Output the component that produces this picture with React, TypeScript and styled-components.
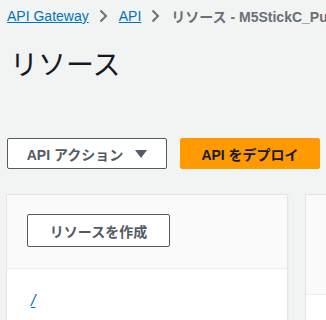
import React from "react";
import styled, { createGlobalStyle } from "styled-components";

const Global = createGlobalStyle`
  html, body {
    margin: 0;
    padding: 0;
    background: #f2f3f3;
    font-family: "Liberation Sans", "Noto Sans CJK JP", sans-serif;
    overflow: hidden;
  }
`;

const Page = styled.div`
  width: 326px;
  height: 320px;
  padding: 0 0 0 7px;
  box-sizing: border-box;
  overflow: hidden;
`;

const Crumbs = styled.nav`
  display: flex;
  align-items: center;
  height: 20px;
  margin-top: 6px;
  font-size: 14px;
  white-space: nowrap;
  color: #545b64;
`;

const CrumbLink = styled.a`
  color: #0073bb;
  text-decoration: underline;
`;

const Chevron = styled.span`
  display: inline-flex;
  margin: 0 11px 0 10px;
`;

const Current = styled.span`
  font-weight: bold;
  color: #687078;
`;

const Title = styled.h1`
  margin: 20px 0 0 3px;
  font-size: 28px;
  font-weight: normal;
  color: #16191f;
  line-height: 40px;
`;

const Actions = styled.div`
  display: flex;
  gap: 13px;
  margin-top: 52px;
`;

const Button = styled.button<{ $primary?: boolean; $w: number }>`
  width: ${(p) => p.$w}px;
  height: 31px;
  border-radius: 2px;
  border: 1px solid ${(p) => (p.$primary ? "#ec7211" : "#545b64")};
  border-color: ${(p) => (p.$primary ? "#ff9900" : "#545b64")};
  background: ${(p) => (p.$primary ? "#ff9900" : "#ffffff")};
  color: ${(p) => (p.$primary ? "#16191f" : "#545b64")};
  font-family: inherit;
  font-size: 14px;
  font-weight: bold;
  display: flex;
  align-items: center;
  justify-content: center;
  gap: 8px;
  padding: 0;
`;

const Caret = styled.span`
  width: 0;
  height: 0;
  border-left: 6px solid transparent;
  border-right: 6px solid transparent;
  border-top: 8px solid #545b64;
  margin-left: 4px;
`;

const Panels = styled.div`
  display: flex;
  gap: 19px;
  margin-top: 26px;
  align-items: flex-start;
`;

const Panel = styled.section<{ $w: number }>`
  width: ${(p) => p.$w}px;
  flex-shrink: 0;
  background: #ffffff;
  box-shadow: 0 0 0 1px #e4e6e6, 1px 1px 1px 0 rgba(0, 27, 43, 0.12);
  height: 130px;
`;

const PanelHead = styled.div<{ $h: number }>`
  height: ${(p) => p.$h}px;
  box-sizing: border-box;
  background: #fafafa;
  border-bottom: 1px solid #eaeded;
  padding: 19px 0 0 20px;
`;

const PanelBody = styled.div`
  padding: 23px 0 0 24px;
  font-size: 16px;
`;

const RootLink = styled.a`
  color: #0073bb;
  text-decoration: underline;
  font-style: italic;
`;

const ChevronIcon = () => (
  <svg width="9" height="14" viewBox="0 0 9 14">
    <path d="M1.5 1.5 L7 7 L1.5 12.5" fill="none" stroke="#687078" strokeWidth="2" />
  </svg>
);

export default function App() {
  return (
    <>
      <Global />
      <Page>
        <Crumbs>
          <CrumbLink>API Gateway</CrumbLink>
          <Chevron>
            <ChevronIcon />
          </Chevron>
          <CrumbLink>API</CrumbLink>
          <Chevron>
            <ChevronIcon />
          </Chevron>
          <Current>リソース - M5StickC_PubSub</Current>
        </Crumbs>
        <Title>リソース</Title>
        <Actions>
          <Button $w={160}>
            API アクション <Caret />
          </Button>
          <Button $primary $w={140}>
            API をデプロイ
          </Button>
        </Actions>
        <Panels>
          <Panel $w={280}>
            <PanelHead $h={74}>
              <Button as="div" $w={141}>
                リソースを作成
              </Button>
            </PanelHead>
            <PanelBody>
              <RootLink>/</RootLink>
            </PanelBody>
          </Panel>
          <Panel $w={200}>
            <PanelHead $h={100} />
          </Panel>
        </Panels>
      </Page>
    </>
  );
}
